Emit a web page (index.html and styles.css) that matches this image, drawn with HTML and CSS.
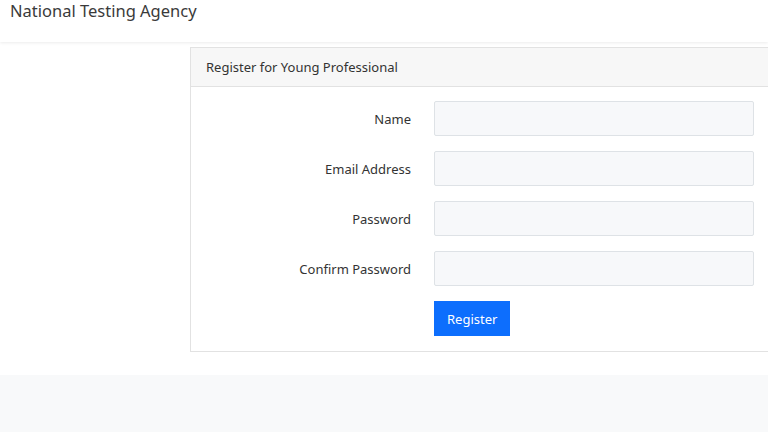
FILE: index.html
```html
<!DOCTYPE html>
<html lang="en">
<head>
    <meta charset="UTF-8">
    <meta name="viewport" content="width=device-width, initial-scale=1.0">
    <title>Register for Young Professional</title>
    <link rel="stylesheet" href="styles.css">
</head>
<body>
    <nav class="navbar">
        <a class="brand" href="#">National Testing Agency</a>
    </nav>
    <main class="main">
        <div class="card">
            <div class="card-header">Register for Young Professional</div>
            <form class="card-body">
                <div class="row">
                    <label for="name">Name</label>
                    <input type="text" id="name">
                </div>
                <div class="row">
                    <label for="email">Email Address</label>
                    <input type="email" id="email">
                </div>
                <div class="row">
                    <label for="password">Password</label>
                    <input type="password" id="password">
                </div>
                <div class="row">
                    <label for="confirm">Confirm Password</label>
                    <input type="password" id="confirm">
                </div>
                <div class="row">
                    <span class="spacer"></span>
                    <button type="submit">Register</button>
                </div>
            </form>
        </div>
    </main>
    <footer class="footer"></footer>
</body>
</html>
```

FILE: styles.css
```css
body {
    font-family: "Noto Sans", "Open Sans", sans-serif;
    font-size: 13px;
    color: #212529;
    background: #fff;
    margin: 0;
    height: 432px;
    overflow: hidden;
}
.navbar {
    height: 42px;
    padding: 0 10px;
    box-shadow: 0 1px 3px rgba(0, 0, 0, 0.08);
}
.brand {
    display: block;
    padding-top: 1px;
    font-size: 16.5px;
    line-height: 20px;
    color: #3a3a3a;
    text-decoration: none;
}
.main {
    display: flex;
    padding: 5px 0 23px 190px;
}
.card {
    flex: 1;
    border: 1px solid #e2e2e2;
    border-right: none;
    background: #fff;
}
.card-header {
    height: 38px;
    line-height: 38px;
    padding: 0 15px;
    font-size: 13px;
    color: #333;
    background: #f7f7f7;
    border-bottom: 1px solid #e2e2e2;
}
.card-body {
    display: flex;
    flex-direction: column;
    gap: 15px;
    padding: 14px 0 15px;
}
.row {
    display: flex;
    align-items: center;
    gap: 23px;
}
.row label, .spacer {
    width: 220px;
    text-align: right;
    color: #333;
}
input {
    width: 320px;
    height: 35px;
    box-sizing: border-box;
    border: 1px solid #dee2e6;
    border-radius: 2px;
    background: #f7f8fa;
}
button {
    height: 35px;
    padding: 0 12px;
    font-family: inherit;
    font-size: 13px;
    color: #fff;
    background: #0d6efd;
    border: 1px solid #0d6efd;
    border-radius: 0;
}
.footer {
    height: 60px;
    background: #f8f9fa;
}
```
